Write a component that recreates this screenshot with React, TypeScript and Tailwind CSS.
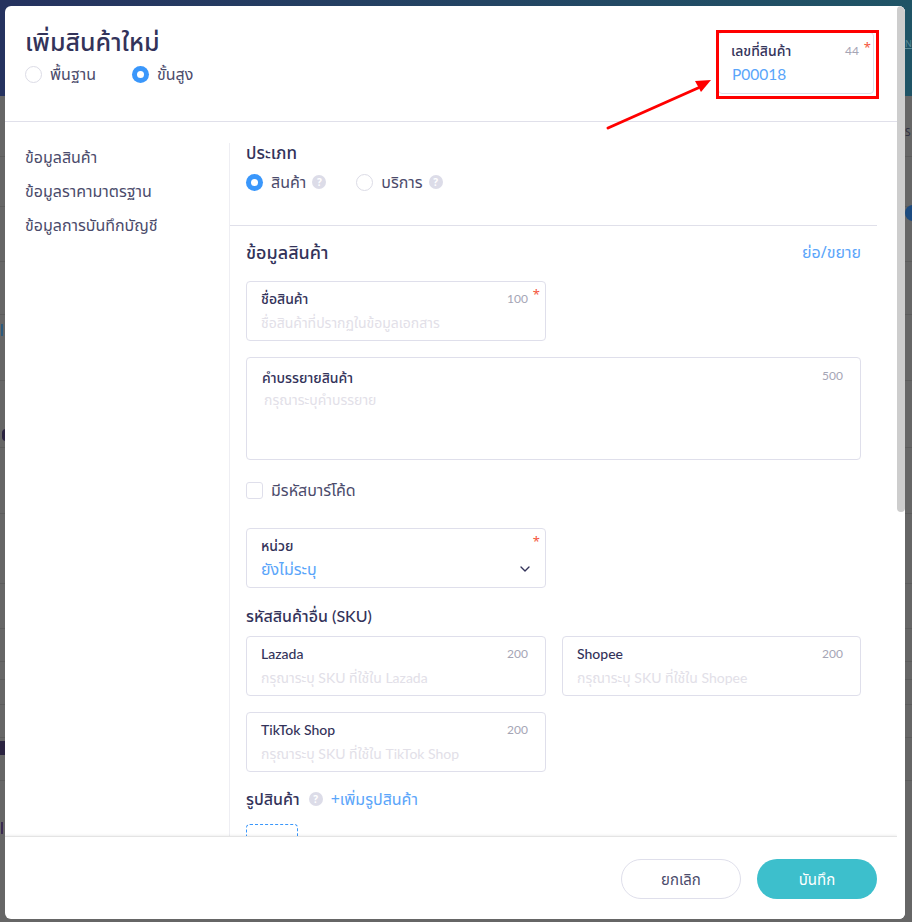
import type { ReactNode } from "react";
import { ChevronDown } from "lucide-react";

const FONT = "font-['Noto_Sans','Noto_Sans_Thai','Liberation_Sans',sans-serif]";
const LATIN = "font-['Lato','Noto_Sans_Thai',sans-serif]";

// แถบเส้นจาง ๆ ของหน้าด้านหลัง modal
const backdropRows = [61, 50, 55, 53, 66, 67, 66, 70, 45, 33, 18, 25, 33, 43];

function Help() {
  return (
    <span className="ml-[6px] inline-flex h-[14px] w-[14px] items-center justify-center rounded-full bg-[#dcdce8] text-[10px] font-bold leading-none text-white">
      ?
    </span>
  );
}

function Radio({ checked, label, help }: { checked?: boolean; label: string; help?: boolean }) {
  return (
    <label className="flex items-center">
      {checked ? (
        <span className="flex h-[17px] w-[17px] items-center justify-center rounded-full bg-[#3a97fb]">
          <span className="h-[7px] w-[7px] rounded-full bg-white" />
        </span>
      ) : (
        <span className="h-[17px] w-[17px] rounded-full border border-[#dcdce6] bg-white" />
      )}
      <span className="ml-2 text-[16px] leading-5 text-[#4b4b6b]">{label}</span>
      {help && <Help />}
    </label>
  );
}

function Count({ value }: { value: string }) {
  return <span className={`${LATIN} text-[12px] leading-5 text-[#a5a5b5]`}>{value}</span>;
}

function Field({
  label,
  placeholder,
  count,
  required,
  className,
}: {
  label: ReactNode;
  placeholder: ReactNode;
  count: string;
  required?: boolean;
  className?: string;
}) {
  return (
    <div className={`relative h-[60px] rounded-[4px] border border-[#dfdfeb] bg-white px-[14px] pt-[7px] ${className ?? ""}`}>
      <div className="flex items-center justify-between pr-[3px]">
        <span className="text-[14px] font-medium leading-5 text-[#33335a]">{label}</span>
        <Count value={count} />
      </div>
      <div className="mt-[4px] text-[14px] leading-5 text-[#e2e0e8]">{placeholder}</div>
      {required && <span className="absolute right-[5px] top-[2px] text-[13px] leading-5 text-[#f4553c]">*</span>}
    </div>
  );
}

function SkuField({ shop }: { shop: string }) {
  return (
    <Field
      label={<span className={LATIN}>{shop}</span>}
      placeholder={
        <>
          กรุณาระบุ <span className={LATIN}>SKU</span> ที่ใช้ใน <span className={LATIN}>{shop}</span>
        </>
      }
      count="200"
    />
  );
}

export default function App() {
  return (
    <div className={`relative h-[922px] w-[912px] overflow-hidden bg-[#666666] ${FONT}`}>
      {/* หน้าหลักที่ถูกบังด้วย overlay */}
      <div className="h-[96px] bg-gradient-to-r from-[#25325f] to-[#1f5466]" />
      {backdropRows.map((height, index) => (
        <div key={index} className="border-b border-[#5c5c5c]" style={{ height }} />
      ))}
      <span className="absolute left-[905px] top-[34px] text-[9px] leading-5 text-[#5c8a96] underline">N</span>
      <span className="absolute left-[905px] top-[122px] text-[10px] leading-5 text-[#2f2f40]">S</span>
      <span className="absolute left-[905px] top-[205px] h-[16px] w-[16px] rounded-full bg-[#1c4b80]" />
      <span className="absolute left-[1px] top-[324px] h-[12px] w-[2px] bg-[#2c5a7c]" />
      <span className="absolute left-[2px] top-[429px] h-[12px] w-[8px] rounded-full bg-[#2a2340]" />
      <span className="absolute left-0 top-[741px] h-[14px] w-[8px] bg-[#2a2340]" />
      <span className="absolute left-[1px] top-[822px] h-[12px] w-[2px] bg-[#3a2a50]" />

      {/* Modal */}
      <div className="absolute left-[5px] top-[6px] flex h-[913px] w-[900px] overflow-hidden rounded-[6px] bg-white">
        <div className="flex min-w-0 flex-1 flex-col">
          <header className="h-[116px] shrink-0 border-b border-[#e0e0ea] pl-[20px] pr-[21px] pt-[19px]">
            <div className="flex items-start justify-between">
              <div>
                <h1 className="text-[25px] font-medium leading-8 text-[#33335a]">เพิ่มสินค้าใหม่</h1>
                <div className="mt-[7px] flex gap-[36px]">
                  <Radio label="พื้นฐาน" />
                  <Radio checked label="ขั้นสูง" />
                </div>
              </div>
              <div className="relative mr-[2px] mt-[7px] h-[62px] w-[156px] rounded-[4px] border border-[#dfdfeb] px-[12px] pt-[8px]">
                <div className="flex items-center justify-between pr-[2px]">
                  <span className="text-[14px] font-medium leading-5 text-[#33335a]">เลขที่สินค้า</span>
                  <Count value="44" />
                </div>
                <div className={`${LATIN} mt-[1px] pl-[1px] text-[15.5px] leading-6 text-[#5aa5fa]`}>P00018</div>
                <span className="absolute right-[2px] top-[4px] text-[13px] leading-5 text-[#f4553c]">*</span>
              </div>
            </div>
          </header>

          <div className="flex min-h-0 flex-1">
            <nav className="mt-[21px] flex w-[225px] shrink-0 flex-col gap-[14px] border-r border-[#eeeef3] pl-[20px] pt-[4px] text-[16px] leading-5 text-[#4b4b6b]">
              <span>ข้อมูลสินค้า</span>
              <span>ข้อมูลราคามาตรฐาน</span>
              <span>ข้อมูลการบันทึกบัญชี</span>
            </nav>

            <main className="mr-[20px] min-w-0 flex-1 overflow-hidden">
              <section className="h-[104px] border-b border-[#e0e0ea] pl-[16px] pt-[21px]">
                <h2 className="text-[17px] font-medium leading-5 text-[#33335a]">ประเภท</h2>
                <div className="mt-[9px] flex gap-[30px]">
                  <Radio checked label="สินค้า" help />
                  <Radio label="บริการ" help />
                </div>
              </section>

              <section className="px-[16px]">
                <div className="flex items-center justify-between pt-[14px]">
                  <h2 className="text-[18px] font-medium leading-6 text-[#33335a]">ข้อมูลสินค้า</h2>
                  <span className="text-[16px] leading-6 text-[#5aa5fa]">ย่อ/ขยาย</span>
                </div>

                <Field
                  className="mt-[17px] w-[300px]"
                  label="ชื่อสินค้า"
                  placeholder="ชื่อสินค้าที่ปรากฏในข้อมูลเอกสาร"
                  count="100"
                  required
                />

                <div className="mt-[16px] h-[103px] rounded-[4px] border border-[#dfdfeb] px-[15px] pt-[10px]">
                  <div className="flex items-start justify-between pr-[2px]">
                    <span className="text-[14px] font-medium leading-5 text-[#33335a]">คำบรรยายสินค้า</span>
                    <span className="-mt-[2px] flex">
                      <Count value="500" />
                    </span>
                  </div>
                  <div className="ml-[2px] mt-[2px] text-[14px] leading-5 text-[#e2e0e8]">กรุณาระบุคำบรรยาย</div>
                </div>

                <label className="mt-[20px] flex items-center">
                  <span className="h-[17px] w-[17px] rounded-[3px] border border-[#dfdfeb]" />
                  <span className="ml-2 text-[16px] leading-5 text-[#4b4b6b]">มีรหัสบาร์โค้ด</span>
                </label>

                <div className="relative mt-[28px] h-[60px] w-[300px] rounded-[4px] border border-[#dfdfeb] px-[14px] pt-[7px]">
                  <div className="text-[14px] font-medium leading-5 text-[#33335a]">หน่วย</div>
                  <div className="mt-[1px] flex items-center justify-between text-[16px] leading-6 text-[#5aa5fa]">
                    ยังไม่ระบุ
                    <ChevronDown className="-mr-[2px] h-[16px] w-[16px] text-[#33335a]" strokeWidth={2} />
                  </div>
                  <span className="absolute right-[5px] top-[2px] text-[13px] leading-5 text-[#f4553c]">*</span>
                </div>

                <h3 className="mt-[18px] text-[16px] font-medium leading-5 text-[#33335a]">
                  รหัสสินค้าอื่น <span className={LATIN}>(SKU)</span>
                </h3>

                <div className="mt-[10px] grid grid-cols-[300px_299px] gap-4">
                  <SkuField shop="Lazada" />
                  <SkuField shop="Shopee" />
                  <SkuField shop="TikTok Shop" />
                </div>

                <div className="mt-[17px] flex items-center">
                  <span className="text-[16px] font-medium leading-5 text-[#33335a]">รูปสินค้า</span>
                  <span className="ml-[3px] flex">
                    <Help />
                  </span>
                  <span className="ml-[8px] text-[16px] leading-5 text-[#5aa5fa]">+เพิ่มรูปสินค้า</span>
                </div>
                <div className="mt-[15px] h-[50px] w-[52px] rounded-[4px] border border-dashed border-[#3a97fb]" />
              </section>
            </main>
          </div>

          <footer className="flex h-[83px] shrink-0 items-start justify-end gap-[16px] border-t border-[#e4e4e4] pr-[20px] pt-[22px] shadow-[0_-1px_2px_rgba(0,0,0,0.06)]">
            <button className="h-[40px] w-[120px] rounded-full border border-[#dfdfeb] bg-white text-[15px] text-[#4b4b6b]">ยกเลิก</button>
            <button className="h-[40px] w-[120px] rounded-full bg-[#3dbfcc] text-[15px] text-white">บันทึก</button>
          </footer>
        </div>

        {/* Scrollbar */}
        <div className="w-[8px] shrink-0 bg-white">
          <div className="h-[506px] rounded-[4px] bg-[#cdcdcd]" />
        </div>
      </div>

      {/* กรอบและลูกศรสีแดงที่ใส่ทับภาพ */}
      <div className="absolute left-[716px] top-[30px] h-[69px] w-[163px] border-[3px] border-[#ff0000]" />
      <svg className="absolute left-0 top-0" width="912" height="922" viewBox="0 0 912 922" fill="none">
        <line x1="608" y1="128" x2="698" y2="88" stroke="#f00" strokeWidth="3" strokeLinecap="round" />
        <polygon points="711,80 695,81 701,92" fill="#f00" />
      </svg>
    </div>
  );
}
